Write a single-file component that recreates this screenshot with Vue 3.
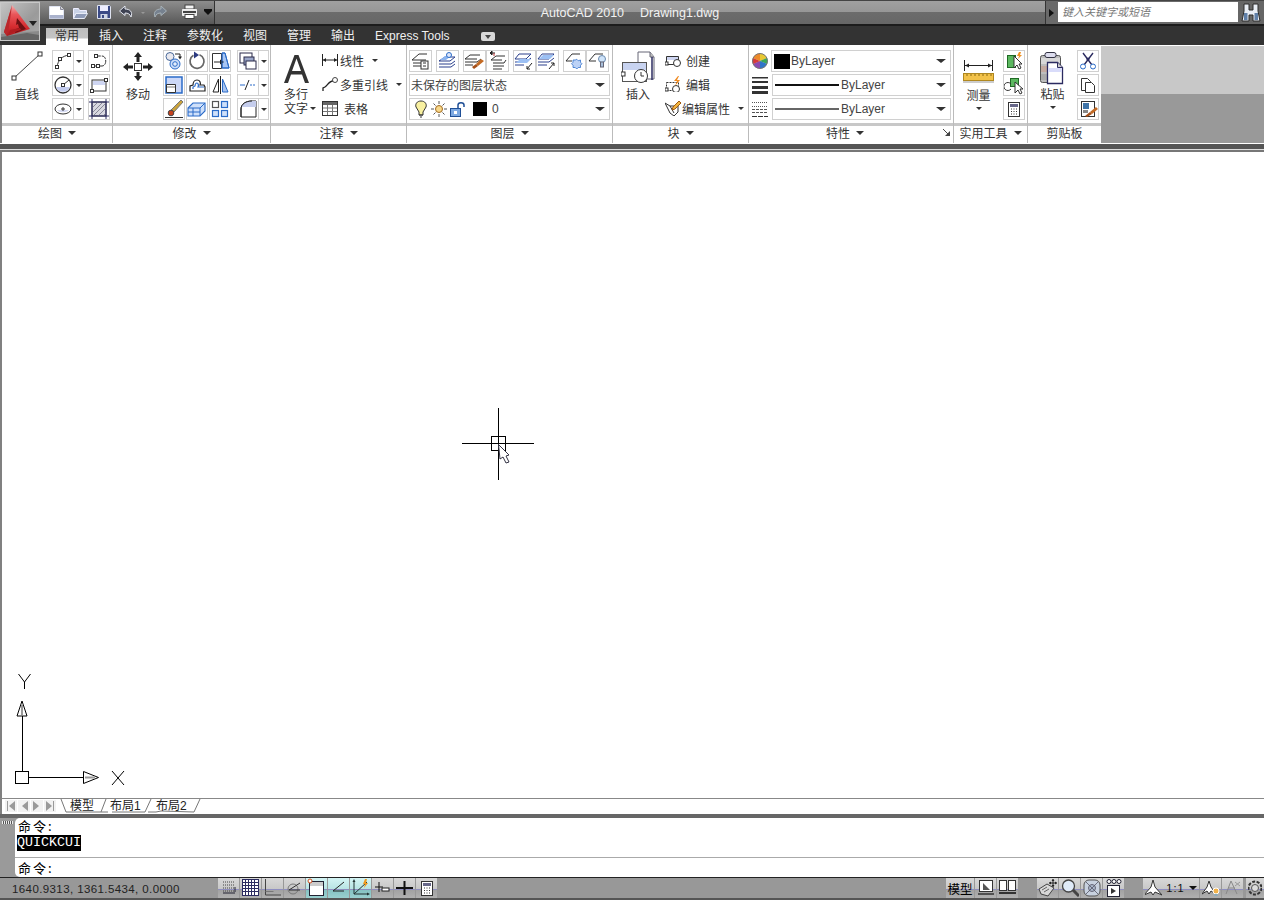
<script setup>
import { h } from 'vue'

const sq = (x, y, s = 3) => `<rect x="${x - s / 2}" y="${y - s / 2}" width="${s}" height="${s}" fill="#fff" stroke="#333"/>`
const I = {
  newf: '<path d="M1.500 2.500h11l3 3v9h-14z" fill="#fff" stroke="#dfe4f2"/><path d="M1.500 11h14v3.500h-14z" fill="#aab2cc"/><path d="M12.500 2.500v3h3" fill="#ccc" stroke="#889"/>',
  open: '<path d="M1.500 4.500h5l1 2h7v3h-11l-2 5z" fill="#c9d2e6" stroke="#eef"/><path d="M4 9.500h11.500l-3 5h-11z" fill="#8f9bb8" stroke="#e8ecf6"/>',
  save: '<path d="M1.500 1.500h12l1 1v12h-13z" fill="#3b4a86" stroke="#dfe3f0"/><rect x="4" y="2" width="8" height="5" fill="#eef"/><rect x="4.500" y="10" width="7" height="4.500" fill="#cfd5e4"/><rect x="6" y="11" width="2" height="3" fill="#3b4a86"/>',
  undo: '<path d="M7 2 1.500 7 7 11.500V9c3 0 5 1 6 4 2-5-1-8-6-8z" fill="#3e4252" stroke="#e6e9f2"/>',
  redo: '<path d="M10 2l5.500 5L10 11.500V9C7 9 5 10 4 13 2 8 5 5 10 5z" fill="#76818f" stroke="#a7b2b8"/>',
  print: '<rect x="4" y="1" width="9" height="4" fill="#f4f4f4" stroke="#444"/><path d="M1.500 5.500h14v6h-14z" fill="#e8e8e8" stroke="#eee"/><rect x="2" y="7" width="13" height="2" fill="#444"/><rect x="4" y="10.500" width="9" height="4" fill="#fff" stroke="#444"/>',
  logo: '<defs><linearGradient id="lgb" x1="0" y1="0" x2="1" y2="1"><stop offset="0" stop-color="#c4c4c4"/><stop offset=".6" stop-color="#9a9a9a"/><stop offset="1" stop-color="#adadad"/></linearGradient><linearGradient id="lg" x1="0" y1="0" x2="0" y2="1"><stop offset="0" stop-color="#f4b0b0"/><stop offset=".3" stop-color="#e9565a"/><stop offset=".7" stop-color="#d52c30"/><stop offset="1" stop-color="#a81c20"/></linearGradient></defs><rect width="38" height="37" fill="url(#lgb)"/><path d="M0 31l38-3v9H0z" fill="#8a8a8a"/><path d="M0 34l26-4 12 2v5H0z" fill="#666"/><path d="M11 2 29 26 6 33 3 29z" fill="url(#lg)"/><path d="M11 2 3 29l3 4 2-9z" fill="#b9282c"/><path d="M16 15 25 26 14 30l1-4 3-1-1-4-2 1z" fill="#6d1013"/><path d="M8 31 20 27l-1-2-10 2z" fill="#b01c20"/>',
  bino: '<path d="M3 1h5v6h4V1h5v7l2 10h-7v-6H8v6H1l2-10z" fill="#e8edf5" stroke="#2c2c2c"/><rect x="3" y="10" width="3.500" height="7" fill="#5f7fa8"/><rect x="13.500" y="10" width="3.500" height="7" fill="#5f7fa8"/>',
  launch: '<path d="M7 7H2l5-5z" fill="#444"/><path d="M0 0l5 5" stroke="#444"/>',
  line: `<path d="M4 27 30 3" stroke="#444" fill="none"/>${sq(4, 27, 4)}${sq(30, 3, 4)}`,
  move: '<g fill="#222"><rect x="11.500" y="11.500" width="7" height="7" fill="#fff" stroke="#333"/><path d="M15 0l4 5h-2.500v5h-3V5H11z"/><path d="M15 29l4-5h-2.500v-4h-3v4H11z"/><path d="M0 15l5-4v2.500h5v3H5V19z"/><path d="M30 15l-5-4v2.500h-5v3h5V19z"/></g>',
  arc: `<path d="M4 16C5 9 9 5 16 4" stroke="#333" fill="none"/>${sq(4, 16)}${sq(7, 8)}${sq(16, 4)}`,
  circle: '<circle cx="10" cy="10" r="8" fill="#fff" stroke="#333" stroke-width="1.300"/><path d="M3 12a7.500 7.500 0 0 0 14 0z" fill="#c4cdf0"/><path d="M10 10l6-5" stroke="#333"/><rect x="8.500" y="8.500" width="3" height="3" fill="#fff" stroke="#333"/>',
  ellipse: '<ellipse cx="10" cy="10" rx="8" ry="5" fill="#fff" stroke="#333"/><path d="M4 11c3 3 9 3 12 0z" fill="#d5daf2"/><path d="M10 8v4M8 10h4" stroke="#333"/>',
  spline: `<path d="M4 15h9c5 0 5-10 0-10H7" stroke="#333" fill="none" stroke-dasharray="5 1"/>${sq(4, 15)}${sq(9, 15)}${sq(7, 5)}`,
  rect: `<rect x="3" y="5" width="14" height="11" fill="#fff" stroke="#333"/><rect x="4" y="6" width="12" height="4" fill="#cfd6f2"/>${sq(3, 16)}${sq(17, 5)}`,
  hatch: '<rect x="3" y="3" width="14" height="14" fill="#d8d8e0" stroke="#223"/><path d="M3 9l6-6M3 14 14 3M4 17 17 4M9 17l8-8M14 17l3-3" stroke="#889" /><path d="M0 3h20M0 17h20M3 0v20M17 0v20" stroke="#2b2b60"/>',
  copy: '<circle cx="6" cy="5.500" r="4" fill="#e8e8ee" stroke="#4a6a9a"/><circle cx="11" cy="13" r="5" fill="#cfe0fa" stroke="#2a6bc8"/><circle cx="11" cy="13" r="2.300" fill="#e6effc" stroke="#2a6bc8"/><path d="M11 3h5v3" fill="none" stroke="#222"/><path d="M14 5.500h4l-2 3z" fill="#222"/>',
  rotate: '<path d="M12.500 3.800a7 7 0 1 1-6 .500" fill="none" stroke="#666" stroke-width="1.700"/><path d="M7 .500v7l5-3.500z" fill="#2b3a80"/>',
  stretch: '<path d="M12 2h3l4 15h-7z" fill="#a8c6f4" stroke="#2a6bc8"/><path d="M2.500 2.500h9v15h-9z" fill="#fff" stroke="#333"/><path d="M4 11h7" stroke="#222"/><path d="M14 11l-4-2.500v5z" fill="#222"/><path d="M12 2h3l4 15h-7z" fill="none" stroke="#2a6bc8"/>',
  scale: '<path d="M2 2h16v16H2z" fill="#ccd8f8" stroke="#2a6bc8" stroke-width="1.500"/><path d="M2.500 9.500h9v8h-9z" fill="#fff" stroke="#333"/><path d="M3 12h8" stroke="#bbb" stroke-width="2"/>',
  offset: '<path d="M3 16V11l3-1c0-2 1-5 4-5s4 3 3 5h4l1 2v4z" fill="none" stroke="#222" stroke-width="1.200"/><path d="M6 14v-2l2-1c0-2 1-3 2-3s2 2 1 4h6" fill="none" stroke="#2a6bc8" stroke-width="1.200"/>',
  mirror: '<path d="M8.500 4v13H3z" fill="#fff" stroke="#222"/><path d="M12.500 4v13H18z" fill="#a8c4f0" stroke="#2a6bc8"/><path d="M10.500 1v18" stroke="#222"/>',
  brush: '<path d="M17 1l2 2-9 10-3-2z" fill="#caa33c" stroke="#777"/><circle cx="7" cy="14" r="2.800" fill="#c6411d" stroke="#444"/><path d="M1 18.500h18" stroke="#333"/>',
  iso: '<path d="M1 9l5-5h12v8l-5 5H1z" fill="#cfe0fa" stroke="#2a6bc8" stroke-width="1.100"/><path d="M1 9h12v8M13 9l5-5M6 9v8M1 13h12" fill="none" stroke="#2a6bc8"/>',
  array: '<g fill="#cfe0fa" stroke="#2a6bc8" stroke-width="1.200"><rect x="2.500" y="2.500" width="6" height="6" fill="#fff" stroke="#555"/><rect x="11.500" y="2.500" width="6" height="6"/><rect x="2.500" y="11.500" width="6" height="6"/><rect x="11.500" y="11.500" width="6" height="6"/></g>',
  layers: '<rect x="2" y="2" width="12" height="10" fill="#fff" stroke="#2b2b4b"/><rect x="6" y="6" width="10" height="8" fill="#9aa6c8" stroke="#2b2b4b"/><rect x="8" y="10" width="10" height="8" fill="#fff" stroke="#2b2b4b"/>',
  dashl: '<path d="M2 10h5" stroke="#2a6bc8"/><path d="M7 15 11 5" stroke="#222"/><path d="M12 10h6" stroke="#2a6bc8" stroke-dasharray="2 1"/>',
  fillet: '<path d="M3 18V10C3 5 8 2 14 2h4v16z" fill="#fff" stroke="#222"/><path d="M3 10C3 5 8 2 14 2h4v6H3z" fill="#c5cdec"/><path d="M3 18V10C3 5 8 2 14 2" fill="none" stroke="#222"/>',
  bigA: '<path d="M0 28 10.500 0h4L25 28h-4l-3-8.500H7L4 28zM8 16h9L12.500 3.500z" fill="#333"/>',
  dim: '<path d="M.500 1v12M15.500 1v12M1 7h14" stroke="#222"/><path d="M1 7l3-2v4zM15 7l-3-2v4z" fill="#222"/>',
  leader: '<path d="M1 15v-3l2-1c2-1 4-6 8-6" fill="none" stroke="#222" stroke-width="1.300"/><circle cx="13" cy="4" r="2.500" fill="#fff" stroke="#444"/>',
  table: '<rect x=".5" y=".5" width="15" height="14" fill="#fff" stroke="#333"/><rect x="1" y="1" width="14" height="3" fill="#666"/><path d="M1 7h14M1 10.500h14M5.500 4v10M10.500 4v10" stroke="#777"/>',
  ls1: '<g fill="none" stroke="#333"><path d="M2 9 9 3h8M2 9h14M3 12h14M3 15h9"/></g><rect x="11" y="10" width="7" height="8" fill="#fff" stroke="#333"/><path d="M13 12h3M13 15h3" stroke="#333"/>',
  ls2: '<g stroke="#2a3f8c" fill="none"><path d="M2 10 8 6h10l-5 4zM2 13h12l4-3M2 16h12l4-3"/></g><path d="M3 9 8 5h6l-5 4z" fill="#8cb4ee"/><circle cx="12" cy="4" r="2.500" fill="#dfe7fa" stroke="#2a6bc8"/>',
  ls3: '<g stroke="#333" fill="none"><path d="M1 8l5-4h10M1 8h12M1 11h12l4-3M1 14h8"/></g><path d="M17 8l3 2-6 5-2-2z" fill="#c36a24"/><path d="M12 13l2 2-4 3-2-2z" fill="#a5501a"/>',
  ls4: '<g stroke="#333" fill="none"><path d="M4 9l5-4h9M4 9h11M6 12h11l2-3M6 15h11M6 18h9"/></g><path d="M3 2h5M3 2l2-2v4z" stroke="#222" fill="#222"/><path d="M7 2v3" stroke="#b33"/>',
  ls5: '<g stroke="#2a3f8c" fill="none"><path d="M5 3h12L12 8H1zM1 11h11l5-4M1 14h9"/></g><path d="M2 12 6 8h11l-4 4z" fill="#9cc0f4"/><path d="M18 12l-5 6M13 15v3h3" stroke="#222" fill="none"/>',
  ls6: '<g stroke="#2a3f8c" fill="none"><path d="M5 3h12L12 8H1zM1 11h11l5-4M1 14h9"/></g><path d="M2 8 6 4h11l-4 4z" fill="#9cc0f4"/><path d="M12 18l5-6M14 12h3v3" stroke="#222" fill="none"/>',
  ls7: '<path d="M2 10 8 3h8M2 10h6" stroke="#333" fill="none"/><path d="M13 7l2 2 3-1v3l2 2-2 2v3h-3l-2 2-2-2H8v-3l-2-2 2-2V8h3z" fill="#bcd2f6" stroke="#2a6bc8" transform="translate(3 3) scale(.75)"/>',
  ls8: '<path d="M2 10 8 3h8M2 10h7" stroke="#333" fill="none"/><circle cx="15" cy="8" r="3.500" fill="#cfe4fa" stroke="#6a8ab0"/><rect x="13.500" y="11" width="3" height="5" fill="#a8c0dc" stroke="#667"/>',
  bulb: '<path d="M7 1c-4 0-6 3-5 6l3 5v3h4v-3l3-5c1-3-1-6-5-6z" fill="#f8f0a0" stroke="#333"/><path d="M5 15h4M6 17h2" stroke="#333"/>',
  sun: '<circle cx="8" cy="8" r="3.500" fill="#f8d88a" stroke="#a06a20"/><path d="M8 0v3M8 13v3M0 8h3M13 8h3M2.500 2.500l2 2M11.500 11.500l2 2M2.500 13.500l2-2M11.500 4.500l2-2" stroke="#555"/>',
  lock: '<rect x="0.500" y="7.500" width="10" height="8" fill="#7da9e2" stroke="#1f4f96"/><rect x="4" y="10" width="3" height="3" fill="#fff"/><path d="M8 7V4c0-3 6-3 6 0v2" fill="none" stroke="#1f4f96" stroke-width="1.500"/>',
  insert: '<path d="M17 1h12l4 5v22H17z" fill="#fff" stroke="#667"/><path d="M29 1v5h4" fill="#bbb" stroke="#667"/><path d="M31 6v23" stroke="#2b2b60" stroke-width="1.500"/><rect x="1.500" y="11.500" width="24" height="19" fill="#fff" stroke="#555"/><rect x="2" y="12" width="23" height="7" fill="#c8d3f0"/><rect x="0" y="21" width="4" height="4" fill="#fff" stroke="#333"/><circle cx="20" cy="25" r="6.500" fill="#fff" stroke="#333"/><path d="M20 21v4h3" stroke="#333" fill="none"/>',
  bcreate: '<path d="M1.500 4.500h12v8h-12z" fill="#fff" stroke="#333"/><path d="M2 5h11v3H2z" fill="#cfd6f2"/><rect x="0" y="10" width="3" height="3" fill="#fff" stroke="#333"/><circle cx="12" cy="11" r="3.500" fill="#fff" stroke="#333"/>',
  bedit: '<path d="M1.500 6.500h12v8h-12z" fill="#fff" stroke="#333" stroke-dasharray="2 1"/><rect x="0" y="12" width="3" height="3" fill="#fff" stroke="#333"/><circle cx="11" cy="13" r="3.500" fill="#fff" stroke="#333"/><path d="M13 0 9 5h3l-2 5 5-6h-3l2-4z" fill="#f08a20"/>',
  battr: '<path d="M0 3l5 3h8v6l-4 4-4-3z" fill="#fff" stroke="#333"/><path d="M5 6l4 7" stroke="#333"/><path d="M14 1l2 2-6 6-3 1 1-3z" fill="#f0b440" stroke="#a05a10"/>',
  wheel: '<circle cx="8" cy="8" r="7.500" fill="#bbb"/><path d="M8 8V.500A7.500 7.500 0 0 1 15 5z" fill="#e8c832"/><path d="M8 8 15 5a7.500 7.500 0 0 1 0 6z" fill="#3aa856"/><path d="M8 8l7 3a7.500 7.500 0 0 1-7 4.500z" fill="#2f74c8"/><path d="M8 8v7.500A7.500 7.500 0 0 1 1 11z" fill="#8a4ab0"/><path d="M8 8 1 11a7.500 7.500 0 0 1 0-6z" fill="#d83a3a"/><path d="M8 8 1 5A7.500 7.500 0 0 1 8 .500z" fill="#ee8a2a"/><circle cx="8" cy="8" r="7.500" fill="none" stroke="#777"/>',
  lw: '<rect x="0" y="0" width="16" height="1.500" fill="#333"/><rect y="4" width="16" height="2" fill="#333"/><rect y="9" width="16" height="3" fill="#333"/><rect y="14" width="16" height="3" fill="#333"/>',
  lt: '<path d="M0 1.500h16M0 5.500h16" stroke="#555" stroke-dasharray="1 1"/><path d="M0 8.500h16M0 11.500h16" stroke="#555" stroke-dasharray="3 1"/><path d="M0 15.500h16" stroke="#333" stroke-dasharray="5 1"/>',
  measure: '<path d="M1.500 3v11M29.500 3v11M2 8.500h27" stroke="#222"/><path d="M2 8.500l4-2v4zM29 8.500l-4-2v4z" fill="#222"/><rect x=".5" y="16.500" width="30" height="7" fill="#f2c24a" stroke="#b08820"/><path d="M4 17v2M8 17v2M12 17v2M16 17v2M20 17v2M24 17v2M28 17v2" stroke="#8a6a10"/><rect y="24" width="31" height="2" fill="#ccc"/>',
  ut1: '<rect x="3.500" y="4.500" width="8" height="12" fill="#5cb860" stroke="#1f6a24"/><path d="M10 5v12l3-3 2 4 2-1-2-4h3z" fill="#fff" stroke="#333"/><path d="M15 1l-2 4h2l-1 3 4-4h-2l1-3z" fill="#f09020"/>',
  ut2: '<rect x="6.500" y="3.500" width="8" height="8" fill="#5cb860" stroke="#1f6a24"/><path d="M7 9a4 4 0 1 0 0 5" fill="none" stroke="#333"/><path d="M11 7v11l3-3 2 4 2-1-2-4h3z" fill="#fff" stroke="#333"/>',
  calc: '<rect x="4.500" y="3.500" width="11" height="14" fill="#fff" stroke="#333"/><rect x="6" y="5" width="8" height="3" fill="#668"/><path d="M7 10h1M9.500 10h1M12 10h1M7 12.500h1M9.500 12.500h1M12 12.500h1M7 15h1M9.500 15h1M12 15h1" stroke="#333"/>',
  paste: '<rect x="1.500" y="3.500" width="20" height="27" rx="2" fill="#bdbdbd" stroke="#555"/><path d="M2 6h19v6H2z" fill="#d8d8d8"/><path d="M2 14h6v6H2z" fill="#c4aaa0"/><path d="M2 22h6v6H2z" fill="#aaa"/><rect x="6" y="0.500" width="11" height="5" rx="2" fill="#dde" stroke="#334"/><path d="M8.500 10.500h10l5 5v16h-15z" fill="#fff" stroke="#2b2b60" stroke-width="1.300"/><path d="M9 16h14v4H9z" fill="#d9dcfa"/><path d="M18.500 10.500v5h5" fill="#ccc" stroke="#2b2b60"/>',
  cut: '<path d="M5 2l9 12M15 2 6 14" stroke="#2b2b60" stroke-width="1.400"/><circle cx="5" cy="15.500" r="2.500" fill="#fff" stroke="#2a6bc8"/><circle cx="15" cy="15.500" r="2.500" fill="#fff" stroke="#2a6bc8"/><circle cx="10" cy="8" r="1.600" fill="#2b2b60"/>',
  copyc: '<path d="M3.500 3.500h6l3 3v9h-9z" fill="#fff" stroke="#333"/><path d="M7.500 7.500h6l3 3v7h-9z" fill="#fff" stroke="#333"/>',
  match: '<rect x="3.500" y="2.500" width="13" height="15" fill="#fff" stroke="#333"/><rect x="5" y="4" width="6" height="6" fill="#3d73a8"/><path d="M5 11h5v3H5z" fill="#888"/><path d="M18 8l2 2-6 5-2-2z" fill="#c36a24"/><path d="M12 13l2 2-5 3-2-1z" fill="#a5501a"/>',
  snapg: '<path d="M4 4h11M4 7h11M4 10h11M4 13h11" stroke="#444" stroke-dasharray="1 1"/><path d="M16 9v5M4 15h12" stroke="#223"/>',
  grid: '<rect x="1.500" y="1.500" width="16" height="16" fill="#fff" stroke="#2b2b60"/><path d="M1.500 4.500h16M1.500 7.500h16M1.500 10.500h16M1.500 13.500h16M4.500 1.500v16M7.500 1.500v16M10.500 1.500v16M13.500 1.500v16" stroke="#2b2b60"/>',
  ortho: '<path d="M2.500 1v16H18" stroke="#444" fill="none"/><path d="M2.500 13.500h8" stroke="#777"/>',
  polar: '<circle cx="8" cy="11" r="5" fill="none" stroke="#777"/><path d="M4 12 15 5M4 12h11" stroke="#333"/>',
  osnap: '<rect x="2.500" y="3.500" width="14" height="14" fill="#fff" stroke="#223"/><rect x="3" y="4" width="13" height="4" fill="#ccc"/><circle cx="3" cy="3" r="2" fill="#fff" stroke="#d0501e"/>',
  otrack: '<path d="M15 4 4 13h11" stroke="#222" fill="none"/>',
  ducs: '<path d="M3 16 16 4M3 16h14M3 3v13" stroke="#233" fill="none"/><path d="M14 1l-2 5h2l-1 4 4-5h-2l1-4z" fill="#f09a20"/><path d="M3 1 1.500 4h3zM19 16l-3-1.500v3z" fill="#233"/>',
  dyn: '<path d="M2 9h8M6 4v10" stroke="#111"/><rect x="9" y="10" width="7" height="3" fill="#fff" stroke="#222"/>',
  lwt: '<path d="M1 10h17M9.500 3v14" stroke="#111" stroke-width="2"/>',
  mpaper: '<rect x="2.500" y="1.500" width="13" height="11" fill="#fff" stroke="#333"/><path d="M6 4v7h7z" fill="#555"/><path d="M1 15h16" stroke="#333" stroke-width="1.500"/>',
  mlay: '<rect x="1.500" y="1.500" width="7" height="10" fill="#fff" stroke="#333"/><rect x="10.500" y="1.500" width="7" height="10" fill="#fff" stroke="#333"/><path d="M1 14h17" stroke="#333" stroke-width="2"/>',
  hand: '<path d="M1 10 9 5l7 4-6 8-7-2z" fill="#d8d8d8" stroke="#444"/><path d="M4 11l5-3M6 13l5-3" stroke="#666"/><path d="M15 0v8M11 4h8" stroke="#222"/><path d="M15 0l-1.500 2h3zM15 8l-1.500-2h3zM11 4l2-1.500v3zM19 4l-2-1.500v3z" fill="#222"/>',
  zoom: '<circle cx="7.500" cy="7" r="6" fill="#dfeaf8" stroke="#444" stroke-width="1.300"/><path d="M12 11l6 6" stroke="#444" stroke-width="3"/>',
  swheel: '<rect x="1" y="1" width="16" height="16" rx="5" fill="#c8d2e0" stroke="#555"/><circle cx="9" cy="9" r="3.500" fill="#aab8cc" stroke="#667"/><path d="M3 3l12 12M15 3 3 15" stroke="#556" stroke-width=".8"/>',
  motion: '<circle cx="3" cy="2.500" r="2" fill="#fff" stroke="#223"/><circle cx="8" cy="2.500" r="2" fill="#fff" stroke="#223"/><circle cx="13" cy="2.500" r="2" fill="#fff" stroke="#223"/><rect x="1.500" y="6.500" width="12" height="11" fill="#fff" stroke="#223"/><path d="M5 9l5 3-5 3z" fill="#333"/>',
  annot: '<path d="M8 0l2 7 7 8-7-3-2 3-2-3-7 3 7-8z" fill="#fff" stroke="#333"/>',
  annot2: '<path d="M7 2l2 6 5 7-5-3-2 3-2-3-5 3 5-7z" fill="#fff" stroke="#333"/><circle cx="14" cy="12" r="3" fill="#f2b24a" stroke="#fff"/><rect x="12.500" y="15" width="3" height="2" fill="#8ab"/>',
  annot3: '<path d="M7 2 2 15M7 2l6 13M4 9h7" stroke="#888" fill="none"/><path d="M11 3 16 7M16 3l-5 4" stroke="#999"/>',
  gear: '<circle cx="7" cy="9" r="6.500" fill="none" stroke="#333" stroke-width="2" stroke-dasharray="3 1.500"/><circle cx="7" cy="9" r="3.500" fill="#ddd" stroke="#555"/>',
}

const Ic = (props) => h('svg', { width: props.w, height: props.h || props.w, viewBox: `0 0 ${props.w} ${props.h || props.w}`, innerHTML: I[props.n] })
Ic.props = ['n', 'w', 'h']

const tabs = ['插入', '注释', '参数化', '视图', '管理', '输出', 'Express Tools']
const layerTop = [['ls1'], ['ls2'], ['ls3', 'ls4'], ['ls5', 'ls6'], ['ls7', 'ls8']]
const drawCols = [['arc', 'circle', 'ellipse'], ['spline', 'rect', 'hatch']]
const modGrid = ['copy', 'rotate', 'stretch', 'scale', 'offset', 'mirror', 'brush', 'iso', 'array']
const modSide = ['layers', 'dashl', 'fillet']
const statL = [['snapg', 0], ['grid', 0], ['ortho', 0], ['polar', 0], ['osnap', 1], ['otrack', 1], ['ducs', 1], ['dyn', 0], ['lwt', 0], ['calc', 0]]
</script>

<template>
  <div class="app">
    <header class="title">
      <div class="appbtn"><Ic n="logo" :w="38" :h="37" /><i class="tri appdrop"></i></div>
      <div class="qat">
        <Ic n="newf" :w="17" /><Ic n="open" :w="17" /><Ic n="save" :w="17" /><Ic class="ud" n="undo" :w="17" />
        <i class="tiny"></i>
        <Ic n="redo" :w="17" />
        <Ic class="pr" n="print" :w="17" />
        <i class="tri qdrop"></i>
      </div>
      <div class="ttl"><span>AutoCAD 2010</span><span>Drawing1.dwg</span></div>
      <div class="searchwrap"><i class="rtri"></i><div class="search">键入关键字或短语</div></div>
      <div class="bino"><Ic n="bino" :w="20" :h="19" /></div>
    </header>

    <nav class="tabs">
      <span class="tab on">常用</span>
      <span class="tab" v-for="t in tabs" :key="t">{{ t }}</span>
      <span class="minbtn"><i></i></span>
    </nav>

    <section class="ribbon">
      <div class="panel p1">
        <div class="body">
          <div class="big w50"><Ic class="m1" n="line" :w="34" :h="30" /><span class="lb">直线</span></div>
          <div class="col c32">
            <div class="grp" v-for="n in drawCols[0]" :key="n"><span class="cell"><Ic :n="n" :w="20" /></span><span class="dd"><i class="tri"></i></span></div>
          </div>
          <div class="col">
            <span class="cell solo" v-for="n in drawCols[1]" :key="n"><Ic :n="n" :w="20" /></span>
          </div>
        </div>
        <div class="foot">绘图<i class="tri"></i></div>
      </div>

      <div class="panel p2">
        <div class="body">
          <div class="big w50"><Ic class="m2" n="move" :w="30" :h="30" /><span class="lb">移动</span></div>
          <div class="mgrid">
            <span class="cell" v-for="n in modGrid" :key="n"><Ic :n="n" :w="20" /></span>
          </div>
          <div class="col c32">
            <div class="grp" v-for="n in modSide" :key="n"><span class="cell"><Ic :n="n" :w="20" /></span><span class="dd"><i class="tri"></i></span></div>
          </div>
        </div>
        <div class="foot">修改<i class="tri"></i></div>
      </div>

      <div class="panel p3">
        <div class="body">
          <div class="big w50">
            <Ic class="ma" n="bigA" :w="25" :h="28" />
            <span class="lb two">多行<br />文字<i class="tri sm over"></i></span>
          </div>
          <div class="rows r3">
            <div class="row"><Ic n="dim" :w="16" :h="14" /><span>线性</span><i class="tri sm g8"></i></div>
            <div class="row"><Ic n="leader" :w="16" :h="16" /><span>多重引线</span><i class="tri sm g8"></i></div>
            <div class="row"><Ic n="table" :w="16" :h="15" /><span class="ind">表格</span></div>
          </div>
        </div>
        <div class="foot">注释<i class="tri"></i></div>
      </div>

      <div class="panel p4">
        <div class="body lbody">
          <div class="ltop">
            <div class="lgrp" v-for="g in layerTop" :key="g[0]">
              <span class="cell" v-for="n in g" :key="n"><Ic :n="n" :w="21" /></span>
            </div>
          </div>
          <div class="combo c1"><span class="cjk">未保存的图层状态</span><i class="tri lg"></i></div>
          <div class="combo">
            <span class="licons"><Ic n="bulb" :w="14" :h="18" /><Ic n="sun" :w="16" /><Ic n="lock" :w="16" /></span>
            <b class="sw"></b><span class="zero">0</span><i class="tri lg"></i>
          </div>
        </div>
        <div class="foot">图层<i class="tri"></i></div>
      </div>

      <div class="panel p5">
        <div class="body">
          <div class="big w50"><Ic class="m3" n="insert" :w="34" :h="32" /><span class="lb">插入</span></div>
          <div class="rows r5">
            <div class="row"><Ic n="bcreate" :w="16" /><span class="ind">创建</span></div>
            <div class="row"><Ic n="bedit" :w="16" /><span class="ind">编辑</span></div>
            <div class="row"><Ic n="battr" :w="16" /><span class="back">编辑属性</span><i class="tri sm g8"></i></div>
          </div>
        </div>
        <div class="foot">块<i class="tri"></i></div>
      </div>

      <div class="panel p6">
        <div class="body propbody">
          <div class="prow"><Ic n="wheel" :w="16" /><div class="combo pc"><b class="sw s2"></b><span>ByLayer</span><i class="tri lg"></i></div></div>
          <div class="prow"><Ic n="lw" :w="17" /><div class="combo pc"><u class="ln thick"></u><span>ByLayer</span><i class="tri lg"></i></div></div>
          <div class="prow"><Ic n="lt" :w="17" /><div class="combo pc"><u class="ln thin"></u><span>ByLayer</span><i class="tri lg"></i></div></div>
        </div>
        <div class="foot shift">特性<i class="tri"></i><Ic class="launch" n="launch" :w="7" /></div>
      </div>

      <div class="panel p7">
        <div class="body">
          <div class="big w49"><Ic class="m4" n="measure" :w="31" :h="27" /><span class="lb">测量</span><i class="tri sm"></i></div>
          <div class="col">
            <span class="cell solo"><Ic n="ut1" :w="20" /></span>
            <span class="cell solo"><Ic n="ut2" :w="20" /></span>
            <span class="cell solo"><Ic n="calc" :w="20" /></span>
          </div>
        </div>
        <div class="foot">实用工具<i class="tri"></i></div>
      </div>

      <div class="panel p8">
        <div class="body">
          <div class="big w49"><Ic class="m5" n="paste" :w="27" :h="33" /><span class="lb">粘贴</span><i class="tri sm"></i></div>
          <div class="col">
            <span class="cell solo"><Ic n="cut" :w="20" /></span>
            <span class="cell solo"><Ic n="copyc" :w="20" /></span>
            <span class="cell solo"><Ic n="match" :w="20" /></span>
          </div>
        </div>
        <div class="foot">剪贴板</div>
      </div>

      <div class="rest"><div></div><div></div></div>
    </section>

    <div class="sep"></div>

    <main class="canvas">
      <div class="cross">
        <svg width="72" height="72" viewBox="0 0 72 72">
          <path d="M36.500 0v72M0 35.500h72" stroke="#000" fill="none" />
          <rect x="29.500" y="28.500" width="14" height="14" fill="none" stroke="#000" />
          <path d="M36.500 36.500 47 47l-3 1 3 6-3 1-3-6-3 2z" fill="#fff" stroke="#334" />
        </svg>
      </div>
      <div class="ucs">
        <svg width="126" height="116" viewBox="0 0 126 116">
          <path d="M16.500 2l6 8 6-8M22.500 10v7" fill="none" stroke="#000" />
          <path d="M20 29l-5 15h10z" fill="#fff" stroke="#000" />
          <path d="M20 33v10" stroke="#999" stroke-width="2" />
          <path d="M20.500 44v55" stroke="#000" />
          <rect x="13.500" y="99.500" width="13" height="12" fill="#fff" stroke="#000" />
          <path d="M27 105.500h54" stroke="#000" />
          <path d="M81.500 99.500l15 6-15 6z" fill="#fff" stroke="#000" />
          <path d="M83 105.500h10" stroke="#999" stroke-width="2" />
          <path d="M110 99l12 14M122 99l-12 14" stroke="#000" fill="none" />
        </svg>
      </div>
    </main>

    <div class="ltabs">
      <div class="navs"><i class="n1"></i><i class="n2"></i><i class="n3"></i><i class="n4"></i></div>
      <svg class="sl" width="146" height="15" viewBox="0 0 146 15">
        <path d="M1 0l5 13h35l5-13M41 13h7M52 13h33l6-13M88 13h8l5-1 33 1 6-13" fill="none" stroke="#777" />
      </svg>
      <span class="lt t1">模型</span><span class="lt t2">布局1</span><span class="lt t3">布局2</span>
    </div>

    <div class="cmdbar"></div>

    <div class="cmd">
      <div class="grip"><i></i></div>
      <div class="cmdbody">
        <div class="hist"><div class="cl">命令:</div><div class="qc">QUICKCUI</div></div>
        <div class="cl input">命令:</div>
      </div>
    </div>

    <footer class="status">
      <div class="coords">1640.9313, 1361.5434, 0.0000</div>
      <div class="sbtns">
        <span v-for="s in statL" :key="s[0]" class="sb" :class="{ act: s[1] }"><Ic :n="s[0]" :w="20" :h="20" /></span>
      </div>
      <div class="grow"></div>
      <span class="sb model">模型</span>
      <span class="sb"><Ic n="mpaper" :w="18" /></span>
      <span class="sb"><Ic n="mlay" :w="19" :h="18" /></span>
      <div class="g18"></div>
      <span class="sb"><Ic n="hand" :w="20" :h="18" /></span>
      <span class="sb"><Ic n="zoom" :w="18" /></span>
      <span class="sb"><Ic n="swheel" :w="18" /></span>
      <span class="sb"><Ic n="motion" :w="16" :h="18" /></span>
      <div class="g18"></div>
      <span class="sb scale"><Ic n="annot" :w="17" /><em>1:1</em><i class="tri"></i></span>
      <span class="sb"><Ic n="annot2" :w="18" /></span>
      <span class="sb"><Ic n="annot3" :w="18" /></span>
      <div class="g3"></div>
      <span class="sb last"><Ic n="gear" :w="14" :h="18" /></span>
    </footer>
  </div>
</template>

<style scoped>
.app { width: 1264px; height: 900px; display: flex; flex-direction: column; overflow: hidden; background: #fff; font: 12px "Liberation Sans", "Noto Sans CJK SC", sans-serif; color: #333; }
i { display: block; font-style: normal; }
svg { display: block; flex: none; }
.tri { width: 0; height: 0; border-left: 4px solid transparent; border-right: 4px solid transparent; border-top: 4px solid #333; }
.tri.sm { border-width: 3px 3px 0; display: inline-block; vertical-align: 3px; }
.tri.lg { border-width: 4px 5px 0; margin-left: auto; }

.title { height: 24px; flex: none; display: flex; background: linear-gradient(#a0a0a0 0, #979797 10px, #6c6c6c 11px, #666 24px); border-top: 1px solid #444; box-sizing: border-box; }
.appbtn { width: 40px; height: 39px; margin-top: 1px; position: relative; z-index: 2; border: 1px solid #c8c8c8; box-sizing: border-box; background: #888; flex: none; }
.appbtn svg { position: absolute; left: 0; top: 0; }
.appdrop { position: absolute; right: 2px; top: 18px; border-top-color: #222; border-width: 5px 4px 0; }
.qat { width: 175px; flex: none; display: flex; align-items: center; padding-left: 8px; box-sizing: border-box; gap: 7px; border-right: 1px solid #333; background: linear-gradient(#8d8d8d, #585858); }
.ud { margin-left: -2px; }
.tiny { width: 0; height: 0; border: 2px solid transparent; border-top-color: #999; margin: 3px -1px 0; }
.pr { margin-left: 6px; }
.qdrop { border-top-color: #111; margin-left: -1px; box-shadow: 0 -2px 0 #111; }
.ttl { flex: 1; display: flex; justify-content: center; gap: 16px; color: #f2f2f2; align-items: center; font-size: 12.500px; background: linear-gradient(transparent 10px, rgba(255,255,255,.35) 10px, transparent 11px); }
.searchwrap { width: 193px; flex: none; display: flex; align-items: center; background: #6a6a6a; border-left: 1px solid #333; box-sizing: border-box; }
.rtri { width: 0; height: 0; border: 4px solid transparent; border-left: 5px solid #111; border-right: 0; margin: 0 4px 0 3px; flex: none; }
.search { flex: 1; height: 20px; margin-bottom: 1px; background: #fff; color: #777; font-style: italic; padding-left: 4px; line-height: 20px; font-size: 11px; }
.bino { width: 26px; flex: none; display: flex; justify-content: center; align-items: center; background: #666; }

.tabs { height: 21px; flex: none; display: flex; align-items: flex-end; padding-left: 46px; background: #333; border-top: 2px solid #1c1c1c; box-sizing: border-box; color: #f0f0f0; }
.tab { height: 17px; line-height: 17px; padding: 0 10px; white-space: nowrap; }
.tab.on { width: 42px; box-sizing: border-box; text-align: center; padding: 0; margin-right: 1px; color: #333; background: linear-gradient(#bdbdbd 0, #c4c4c4 10px, #fff 11px); }
.minbtn { margin-left: 21px; width: 14px; height: 9px; background: #d8d8d8; border-radius: 2px; display: flex; justify-content: center; align-items: center; margin-bottom: 4px; }
.minbtn i { width: 0; height: 0; border: 3px solid transparent; border-top: 4px solid #444; border-bottom: 0; }

.ribbon { height: 98px; flex: none; display: flex; padding-left: 2px; background: #fff; box-shadow: inset 2px 0 #808080; }
.panel { flex: none; display: flex; flex-direction: column; border-right: 1px solid #bbb; box-sizing: border-box; }
.p1 { width: 111px; } .p2 { width: 158px; } .p3 { width: 136px; } .p4 { width: 206px; } .p5 { width: 136px; } .p6 { width: 205px; } .p7 { width: 74px; } .p8 { width: 73px; border-right: 0; }
.body { height: 78px; display: flex; box-sizing: border-box; padding-top: 5px; flex: none; }
.foot { border-top: 3px solid #c8c8c8; display: flex; align-items: center; justify-content: center; gap: 6px; position: relative; height: 20px; padding-bottom: 4px; box-sizing: border-box; }
.foot .tri { margin-top: 1px; }
.shift { padding-right: 12px; }
.launch { position: absolute; right: 3px; top: 3px; }
.w50 { width: 50px; } .w49 { width: 49px; }
.big { flex: none; display: flex; flex-direction: column; align-items: center; }
.m1 { margin-top: 1px; margin-bottom: 7px; }
.m2 { margin-top: 2px; margin-bottom: 6px; }
.ma { margin-top: 5px; margin-bottom: 5px; }
.m3 { margin-top: 1px; margin-bottom: 5px; }
.m4 { margin-top: 7px; margin-bottom: 5px; }
.m5 { margin-top: 2px; margin-bottom: 3px; }
.lb { line-height: 15px; color: #333; }
.lb.two { line-height: 14px; }
.lb + .tri { margin-top: 3px; }
.tri.over { margin-left: 2px; margin-right: -8px; }
.col { display: flex; flex-direction: column; gap: 2px; }
.c32 { margin-right: 4px; }
.grp { display: flex; height: 22px; border: 1px solid #d0d0d0; box-sizing: border-box; width: 32px; }
.cell { display: block; width: 20px; height: 20px; flex: none; }
.solo { border: 1px solid #d0d0d0; width: 22px; height: 22px; box-sizing: border-box; }
.dd { flex: 1; border-left: 1px solid #d0d0d0; display: flex; align-items: center; justify-content: center; }
.dd .tri { border-width: 3px 3px 0; }
.mgrid { display: grid; grid-template-columns: repeat(3, 22px); grid-auto-rows: 22px; gap: 2px 1px; width: 70px; margin-right: 4px; flex: none; }
.mgrid .cell { width: 22px; height: 22px; box-sizing: border-box; border: 1px solid #d0d0d0; }
.rows { display: flex; flex-direction: column; margin-top: -2px; }
.r3 { margin-left: 1px; }
.row { height: 24px; display: flex; align-items: center; gap: 2px; white-space: nowrap; }
.row .ind { margin-left: 4px; }
.r5 .ind { margin-left: 3px; }
.back { margin-left: -1px; }
.g8 { margin-left: 6px; }
.r5 { margin-left: 2px; }
.lbody { display: block; padding: 5px 2px 0; }
.ltop { display: flex; gap: 4px; height: 22px; margin-bottom: 2px; }
.lgrp { display: flex; }
.lgrp .cell { width: 23px; height: 22px; box-sizing: border-box; border: 1px solid #d0d0d0; }
.combo { display: flex; align-items: center; height: 22px; box-sizing: border-box; border: 1px solid #d0d0d0; padding: 0 4px 0 2px; margin-bottom: 2px; color: #444; }
.c1 { padding-left: 1px; }
.cjk { margin-top: -2px; }
.licons { display: flex; align-items: center; gap: 3px; margin-left: 2px; width: 59px; }
.sw { display: block; width: 14px; height: 14px; background: #000; flex: none; }
.zero { margin-left: 5px; }
.propbody { display: block; padding: 5px 2px 0 3px; }
.prow { display: flex; align-items: center; gap: 3px; margin-bottom: 2px; height: 22px; }
.prow .combo { flex: 1; margin: 0; }
.s2 { width: 16px; height: 15px; margin-right: 1px; }
.ln { display: block; text-decoration: none; width: 64px; margin-right: 2px; flex: none; }
.thick { border-top: 2px solid #111; }
.thin { border-top: 2px solid #666; }
.rest { flex: 1; display: flex; flex-direction: column; margin-top: 1px; }
.rest div:first-child { height: 48px; background: #c8c8c8; }
.rest div:last-child { height: 49px; background: #999; }

.sep { height: 9px; flex: none; box-sizing: border-box; background: #555; border-top: 1px solid #fff; border-bottom: 2px solid #777; box-shadow: inset 0 -1px #ddd; }
.canvas { flex: 1; position: relative; background: #fff; border-left: 2px solid #808080; }
.cross { position: absolute; left: 460px; top: 256px; }
.ucs { position: absolute; left: 0; top: 520px; }

.ltabs { height: 16px; flex: none; position: relative; box-sizing: border-box; border-top: 1px solid #888; border-left: 2px solid #808080; display: flex; align-items: flex-start; background: #fff; }
.navs { display: flex; margin-left: 3px; padding-top: 1px; }
.navs i { width: 12px; height: 12px; margin-right: 1px; position: relative; background: #f2f2f2; }
.navs i::after { content: ""; position: absolute; top: 1px; width: 0; height: 0; border: 5px solid transparent; }
.n1::after, .n2::after { right: 2px; border-right: 6px solid #9a9a9a !important; border-left: 0 !important; }
.n3::after, .n4::after { left: 2px; border-left: 6px solid #9a9a9a !important; border-right: 0 !important; }
.n1::before, .n4::before { content: ""; position: absolute; top: 1px; width: 1px; height: 10px; background: #9a9a9a; }
.n1::before { left: 2px; } .n4::before { right: 2px; }
.sl { position: absolute; left: 58px; top: 0; }
.lt { position: absolute; top: 0; line-height: 14px; color: #222; }
.t1 { left: 68px; } .t2 { left: 108px; } .t3 { left: 154px; }
.cmdbar { height: 4px; flex: none; background: #666; }
.cmd { height: 60px; flex: none; display: flex; background: #9a9a9a; border-bottom: 1px solid #222; box-sizing: border-box; }
.grip { width: 15px; flex: none; padding: 3px 0 0 2px; box-sizing: border-box; }
.grip i { width: 11px; height: 3px; background: repeating-linear-gradient(90deg, #eee 0 1px, #555 1px 2px); }
.cmdbody { flex: 1; background: #fff; border-radius: 5px 0 0 5px; display: flex; flex-direction: column; font-family: "Noto Sans CJK SC", sans-serif; color: #000; }
.hist { height: 40px; border-bottom: 1px solid #aaa; box-sizing: border-box; }
.cl { margin-left: 3px; height: 16px; line-height: 16px; font-size: 13px; letter-spacing: 2px; }
.qc { margin: 1px 0 0 2px; width: 64px; height: 16px; background: #000; color: #fff; font: 13.330px/16px "Liberation Mono", monospace; letter-spacing: 0; }
.input { margin-top: 2px; }

.status { height: 22px; flex: none; display: flex; align-items: stretch; background: #989898; border-bottom: 2px solid #555; box-sizing: border-box; }
.coords { width: 218px; flex: none; padding-left: 12px; box-sizing: border-box; line-height: 22px; color: #222; font-size: 11.500px; letter-spacing: .4px; white-space: pre; }
.sbtns { display: flex; }
.sb { width: 21px; flex: none; margin-right: 1px; display: flex; align-items: center; justify-content: center; background: linear-gradient(#d8d8d8 0, #c8c8c8 11px, #8f8fc0 11px, #8f8fc0 12px, #a2a2a2 12px, #b0b0b0 100%); }
.sb.act { background: linear-gradient(#d4f4f4 0, #b8e4e4 11px, #8f8fc0 11px, #8f8fc0 12px, #85c2c2 12px, #9ad0d0 100%); }
.grow { flex: 1; }
.g18 { width: 18px; flex: none; }
.g3 { width: 2px; flex: none; }
.model { width: 28px; color: #000; font-size: 12.500px; font-family: "Noto Sans CJK SC", sans-serif; }
.scale { width: 56px; gap: 4px; }
.scale em { font: 11px "Liberation Sans", sans-serif; letter-spacing: 1px; color: #111; }
.scale .tri { border-top-color: #111; }
.last { width: 18px; margin-right: 0; }
</style>

<style>
html, body { margin: 0; background: #fff; }
</style>
